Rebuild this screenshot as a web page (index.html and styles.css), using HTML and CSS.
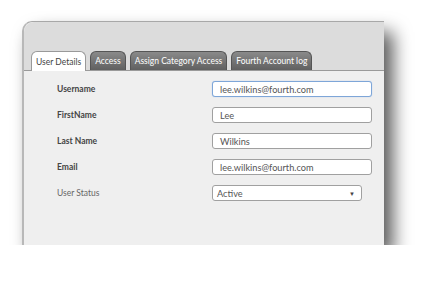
FILE: index.html
```html
<!DOCTYPE html>
<html lang="en">
<head>
    <meta charset="UTF-8">
    <meta name="viewport" content="width=device-width, initial-scale=1.0">
    <title>User Details</title>
    <link rel="stylesheet" href="styles.css">
</head>
<body>
    <div class="panel">
        <div class="tabs">
            <div class="tab active">User Details</div>
            <div class="tab">Access</div>
            <div class="tab">Assign Category Access</div>
            <div class="tab">Fourth Account log</div>
        </div>
        <div class="content">
            <div class="row">
                <label class="label">Username</label>
                <div class="field focused">lee.wilkins@fourth.com</div>
            </div>
            <div class="row">
                <label class="label">FirstName</label>
                <div class="field">Lee</div>
            </div>
            <div class="row">
                <label class="label">Last Name</label>
                <div class="field">Wilkins</div>
            </div>
            <div class="row">
                <label class="label">Email</label>
                <div class="field">lee.wilkins@fourth.com</div>
            </div>
            <div class="row">
                <label class="label plain">User Status</label>
                <div class="select">
                    <span>Active</span>
                    <span class="arrow">&#9660;</span>
                </div>
            </div>
        </div>
    </div>
</body>
</html>
```

FILE: styles.css
```css
body {
    margin: 0;
    background-color: white;
    font-family: Lato, "Noto Sans", sans-serif;
}
.panel {
    margin: 21px 0 0 22px;
    width: 362px;
    height: 224px;
    display: flex;
    flex-direction: column;
    border-top: 1px solid #a8a8a8;
    border-left: 2px solid #b8b8b8;
    border-top-left-radius: 10px;
    background-color: #efefef;
    box-shadow: 9px 11px 18px rgba(0,0,0,0.65);
    box-sizing: border-box;
}
.tabs {
    height: 48px;
    display: flex;
    align-items: flex-end;
    gap: 4px;
    padding-left: 7px;
    background-color: #dcdcdc;
    border-top-left-radius: 10px;
    border-bottom: 1px solid #9a9a9a;
}
.tab {
    height: 18px;
    padding: 0 4px;
    display: flex;
    align-items: center;
    font-size: 8.5px;
    color: white;
    background: linear-gradient(#8a8a8a, #606060);
    border: 1px solid #555;
    border-bottom: none;
    border-radius: 6px 6px 0 0;
}
.tab.active {
    background: white;
    color: #444;
    border-color: #999;
    height: 19px;
    margin-bottom: -1px;
}
.content {
    padding-top: 10px;
    display: flex;
    flex-direction: column;
    gap: 10px;
}
.row {
    display: flex;
    align-items: center;
    height: 16px;
}
.label {
    width: 155px;
    padding-left: 33px;
    font-size: 8.5px;
    font-weight: bold;
    color: #444;
}
.label.plain {
    font-weight: normal;
    color: #666;
}
.field, .select {
    box-sizing: border-box;
    height: 16px;
    width: 160px;
    padding-left: 7px;
    display: flex;
    align-items: center;
    font-size: 9.2px;
    color: #555;
    background: white;
    border: 1px solid #a0a0a0;
    border-radius: 3px;
}
.field.focused {
    border-color: #7ea6d8;
    box-shadow: 0 0 1px #9bbbe6;
}
.select {
    width: 150px;
    padding: 0 6px 0 4px;
    justify-content: space-between;
}
.arrow {
    font-size: 6px;
    color: #444;
}
```
